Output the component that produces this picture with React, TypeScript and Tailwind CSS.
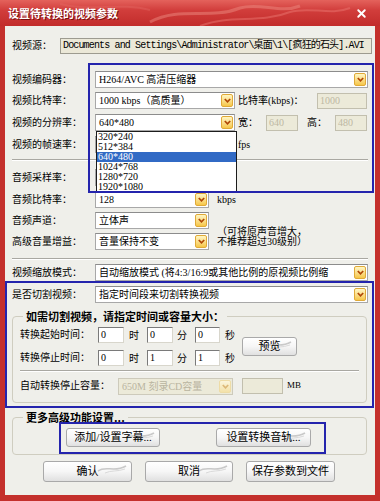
import { X } from "lucide-react";

// 视频转换参数对话框 (XP 风格 + 红色皮肤)

function Arrow({ off }: { off?: boolean }) {
  return (
    <span
      className={`mr-[1px] flex h-[13px] w-[12px] shrink-0 items-center justify-center rounded-[2px] border ${
        off
          ? "border-[#eedca6] bg-gradient-to-b from-[#fbf5dc] to-[#f3e1a8]"
          : "border-[#e0aa38] bg-gradient-to-b from-[#fff6c2] to-[#f6c746]"
      }`}
    >
      <svg width="7" height="5" viewBox="0 0 7 5">
        <path d="M0.8 1 L3.5 3.8 L6.2 1" fill="none" stroke={off ? "#dcb878" : "#b04805"} strokeWidth="1.7" />
      </svg>
    </span>
  );
}

function Combo({ text, className = "", off }: { text?: string; className?: string; off?: boolean }) {
  return (
    <div
      className={`flex h-[17px] items-center border ${
        off ? "border-[#cdcabb] bg-[#ecead9] text-[#b9b49f]" : "border-[#a8a8a8] border-t-[#8c8c8c] bg-white"
      } ${className}`}
    >
      <span className="min-w-0 flex-1 overflow-hidden whitespace-nowrap pl-[3px] text-[10px] leading-[15px]">{text}</span>
      <Arrow off={off} />
    </div>
  );
}

function Field({ value, className = "", off }: { value?: string; className?: string; off?: boolean }) {
  return (
    <div
      className={`h-[16px] border pl-[2px] text-[10px] leading-[14px] ${
        off
          ? "border-[#c2bfae] bg-[#ecead9] text-[#bdb8a3]"
          : "border-[#7a7a7a] border-b-[#d8d6cc] border-r-[#d8d6cc] bg-white"
      } ${className}`}
    >
      {value}
    </div>
  );
}

function Btn({ children, className = "" }: { children: React.ReactNode; className?: string }) {
  return (
    <div
      className={`relative flex shrink-0 items-center justify-center overflow-hidden rounded-[3px] border border-[#a9a9a9] bg-gradient-to-b from-white via-[#f6f6f6] to-[#e0e0e0] text-[11px] ${className}`}
    >
      <svg className="absolute right-[3px] top-[1px]" width="32" height="12" viewBox="0 0 32 12">
        <path d="M2 8 C10 2, 18 10, 30 3" stroke="#c9c9c9" strokeWidth="1.6" fill="none" />
        <path d="M9 10 C15 7, 21 9, 29 6" stroke="#d9d9d9" strokeWidth="1" fill="none" />
      </svg>
      <span className="relative">{children}</span>
    </div>
  );
}

function Label({ children, w = "w-[83px]" }: { children: React.ReactNode; w?: string }) {
  return <span className={`${w} shrink-0 whitespace-nowrap text-[10px] leading-none`}>{children}</span>;
}

const Sep = ({ className = "" }: { className?: string }) => (
  <div className={`border-b border-t border-b-white border-t-[#a9a8a2] ${className}`} />
);

export default function App() {
  const sizes = ["320*240", "512*384", "640*480", "1024*768", "1280*720", "1920*1080"];

  return (
    <div className="relative flex h-[501px] w-[380px] flex-col overflow-hidden bg-[#c4302c] font-['Liberation_Serif','Noto_Sans_CJK_SC',serif] text-black">
      {/* 标题栏 */}
      <div className="relative flex h-[26px] shrink-0 items-center bg-[linear-gradient(180deg,#e4625c_0%,#d13d3b_40%,#c22c2b_100%)] px-[8px]">
        <svg className="absolute inset-0" width="380" height="26" viewBox="0 0 380 26">
          <path d="M150 22 C180 6, 210 20, 240 8 C260 2, 280 14, 300 6" stroke="#ec8a80" strokeWidth="3" fill="none" opacity="0.5" />
          <path d="M200 26 C230 14, 260 24, 290 12 C310 6, 330 16, 350 8" stroke="#e97670" strokeWidth="2" fill="none" opacity="0.5" />
          <path d="M60 4 C90 12, 120 2, 150 10" stroke="#e36a64" strokeWidth="2" fill="none" opacity="0.4" />
        </svg>
        <span className="relative text-[11px] font-bold text-white [text-shadow:1px_1px_0_#7a1010] font-['Noto_Sans_CJK_SC',sans-serif]">
          设置待转换的视频参数
        </span>
        <X className="relative ml-auto mr-[4px] text-white" size={13} strokeWidth={3.5} />
      </div>

      {/* 客户区 */}
      <div className="mx-[5px] mb-[6px] flex flex-1 flex-col bg-[#efefea] px-[7px] pt-[12px]">
        <div className="flex h-[16px] items-center">
          <Label w="w-[48px]">视频源：</Label>
          <div className="-mr-[4px] h-[16px] flex-1 overflow-hidden whitespace-nowrap border border-[#9d9b90] bg-[#ebe8d8] pl-[2px] font-['Liberation_Mono','Noto_Sans_CJK_SC',monospace] text-[10px] leading-[14px] tracking-[-0.85px]">
            Documents and Settings\Administrator\桌面\1\[疯狂的石头].AVI
          </div>
        </div>

        <div className="mt-[17px] flex h-[17px] items-center">
          <Label>视频编码器：</Label>
          <Combo text="H264/AVC 高清压缩器" className="flex-1" />
        </div>

        <div className="mt-[4px] flex h-[17px] items-center">
          <Label>视频比特率：</Label>
          <Combo text="1000 kbps（高质量）" className="w-[140px]" />
          <span className="ml-[3px] w-[79px] whitespace-nowrap text-[10px]">比特率(kbps)：</span>
          <Field value="1000" off className="w-[50px]" />
        </div>

        <div className="mt-[5px] flex h-[17px] items-center">
          <Label>视频的分辨率：</Label>
          <Combo text="640*480" className="w-[140px]" />
          <span className="ml-[3px] w-[28px] text-[10px]">宽：</span>
          <Field value="640" off className="w-[32px]" />
          <span className="ml-[9px] w-[28px] text-[10px]">高：</span>
          <Field value="480" off className="w-[32px]" />
        </div>

        {/* 被下拉列表遮住的行 */}
        <div className="mt-[5px] flex h-[17px] items-center">
          <Label>视频的帧速率：</Label>
          <Combo className="w-[140px]" />
          <span className="ml-[3px] text-[10px]">fps</span>
        </div>

        <Sep className="mt-[6px]" />

        <div className="mt-[8px] flex h-[17px] items-center">
          <Label>音频采样率：</Label>
          <Combo className="w-[114px]" />
        </div>

        <div className="mt-[5px] flex h-[17px] items-center">
          <Label>音频比特率：</Label>
          <Combo text="128" className="w-[114px]" />
          <span className="ml-[8px] text-[10px]">kbps</span>
        </div>

        <div className="mt-[4px] flex h-[17px] items-center">
          <Label>音频声道：</Label>
          <Combo text="立体声" className="w-[114px]" />
        </div>

        <div className="mt-[4px] flex h-[17px] items-center">
          <Label>高级音量增益：</Label>
          <Combo text="音量保持不变" className="w-[114px]" />
          <div className="-mt-[9px] ml-[8px] flex flex-col text-[10px] leading-[10px]">
            <span>（可将原声音增大，</span>
            <span>不推荐超过30级别）</span>
          </div>
        </div>

        <Sep className="mt-[8px]" />

        <div className="mt-[4px] flex h-[17px] items-center">
          <Label>视频缩放模式：</Label>
          <Combo text="自动缩放模式 (将4:3/16:9或其他比例的原视频比例缩" className="min-w-0 flex-1" />
        </div>

        <div className="mt-[5px] flex h-[17px] items-center">
          <Label>是否切割视频：</Label>
          <Combo text="指定时间段来切割转换视频" className="flex-1" />
        </div>

        {/* 切割分组 */}
        <div className="relative mr-[1px] mt-[13px] rounded-[4px] border border-[#cfcdc0] px-[7px] pb-[8px] pt-[10px]">
          <span className="absolute -top-[8px] left-[10px] bg-[#efefea] px-[3px] text-[11px] font-bold leading-[14px] font-['Noto_Sans_CJK_SC',sans-serif]">
            如需切割视频，请指定时间或容量大小：
          </span>
          <div className="flex items-center">
            <div className="flex w-[222px] flex-col gap-[7px]">
              <div className="flex h-[16px] items-center">
                <Label w="w-[78px]">转换起始时间：</Label>
                <Field value="0" className="w-[26px]" />
                <span className="w-[23px] pl-[5px] text-[10px]">时</span>
                <Field value="0" className="w-[26px]" />
                <span className="w-[22px] pl-[4px] text-[10px]">分</span>
                <Field value="0" className="w-[25px]" />
                <span className="pl-[5px] text-[10px]">秒</span>
              </div>
              <div className="flex h-[16px] items-center">
                <Label w="w-[78px]">转换停止时间：</Label>
                <Field value="0" className="w-[26px]" />
                <span className="w-[23px] pl-[5px] text-[10px]">时</span>
                <Field value="1" className="w-[26px]" />
                <span className="w-[22px] pl-[4px] text-[10px]">分</span>
                <Field value="1" className="w-[25px]" />
                <span className="pl-[5px] text-[10px]">秒</span>
              </div>
            </div>
            <Btn className="h-[19px] w-[55px]">预览</Btn>
          </div>
          <Sep className="mt-[4px]" />
          <div className="mt-[6px] flex h-[16px] items-center">
            <Label w="w-[98px]">自动转换停止容量：</Label>
            <Combo text="650M 刻录CD容量" off className="w-[115px]" />
            <Field off className="ml-[9px] w-[41px]" />
            <span className="ml-[4px] text-[9px]">MB</span>
          </div>
        </div>

        {/* 更多高级功能 */}
        <div className="relative mr-[1px] mt-[14px] flex gap-[56px] rounded-[4px] border border-[#cfcdc0] pb-[7px] pl-[53px] pt-[10px]">
          <span className="absolute -top-[8px] left-[10px] bg-[#efefea] px-[3px] text-[11px] font-bold leading-[14px] font-['Noto_Sans_CJK_SC',sans-serif]">
            更多高级功能设置...
          </span>
          <Btn className="h-[19px] w-[94px]">添加/设置字幕...</Btn>
          <Btn className="h-[19px] w-[95px]">设置转换音轨...</Btn>
        </div>

        <div className="mt-[6px] flex gap-[13px] pl-[31px]">
          <Btn className="h-[21px] w-[89px]">确认</Btn>
          <Btn className="h-[21px] w-[88px]">取消</Btn>
          <Btn className="h-[21px] w-[89px]">保存参数到文件</Btn>
        </div>
      </div>

      {/* 分辨率下拉列表 (展开状态) */}
      <div className="absolute left-[96px] top-[131px] w-[141px] border border-[#1c1c1c] bg-white">
        {sizes.map((s) => (
          <div
            key={s}
            className={`h-[10px] pl-[1px] text-[10px] leading-[10px] ${s === "640*480" ? "bg-[#316ac5] text-white" : ""}`}
          >
            {s}
          </div>
        ))}
      </div>

      {/* 蓝色标注框 */}
      <div className="pointer-events-none absolute left-[88px] top-[63px] h-[130px] w-[286px] border-2 border-[#2424ad]" />
      <div className="pointer-events-none absolute left-[5px] top-[281px] h-[127px] w-[369px] border-2 border-[#2424ad]" />
      <div className="pointer-events-none absolute left-[59px] top-[422px] h-[32px] w-[267px] border-2 border-[#2424ad]" />
    </div>
  );
}
